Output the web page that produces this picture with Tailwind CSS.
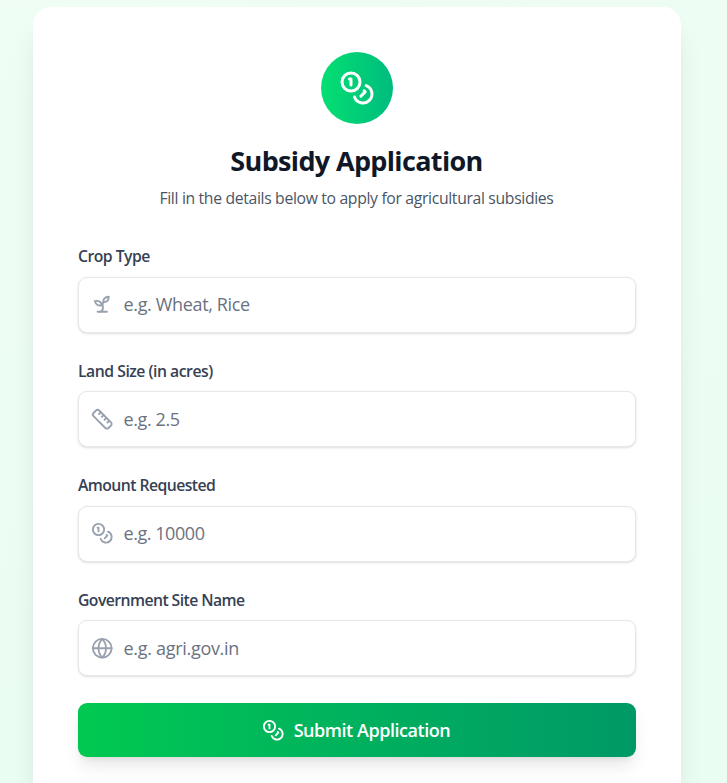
<!DOCTYPE html>
<html lang="en">
<head>
<meta charset="utf-8">
<title>Subsidy Application</title>
<script src="https://cdn.jsdelivr.net/npm/@tailwindcss/browser@4"></script>
</head>
<body class="h-[783px] overflow-hidden bg-[linear-gradient(165deg,#effdf4,#e9fdf3)] font-['Segoe_UI','Open_Sans','Noto_Sans',sans-serif]">
<svg class="hidden">
  <symbol id="coins" viewBox="0 0 24 24"><circle cx="8" cy="8" r="6"/><path d="M18.09 10.37A6 6 0 1 1 10.34 18"/><path d="M7 6h1v4"/><path d="m16.71 13.88.7.71-2.82 2.82"/></symbol>
</svg>
<main class="ml-[33px] mt-[7px] h-[776px] w-[648px] rounded-t-[18px] bg-white px-[45px] pt-[45px] shadow-[0_22px_28px_-5px_rgba(0,0,0,0.1),0_9px_11px_-7px_rgba(0,0,0,0.1)]">
  <header class="flex flex-col items-center">
    <div class="flex size-[72px] items-center justify-center rounded-full bg-linear-to-r from-[#05df72] to-[#00bc7d] text-white">
      <svg class="size-9 fill-none stroke-current stroke-2 [stroke-linecap:round] [stroke-linejoin:round]"><use href="#coins"/></svg>
    </div>
    <h1 class="mt-[19px] whitespace-nowrap pr-[1px] text-[27px] leading-[36px] font-bold tracking-[-0.65px] text-[#101828]">Subsidy Application</h1>
    <p class="mt-[8px] whitespace-nowrap pr-[1px] text-[15.75px] leading-[22px] tracking-[-0.34px] text-[#4a5565]">Fill in the details below to apply for agricultural subsidies</p>
  </header>
  <form class="mt-[35.7px]">
    <div class="h-[114.5px]">
      <label for="crop" class="block h-[32px] pt-[0.4px] text-[15.75px] leading-[22px] font-semibold tracking-[-0.52px] text-[#364153]">Crop Type</label>
      <div class="flex h-[56px] items-center gap-[10.5px] rounded-[9px] border border-gray-200 bg-white pl-[11.5px] shadow-[0_1px_3px_rgba(0,0,0,0.1),0_1px_2px_-1px_rgba(0,0,0,0.1)]">
        <svg viewBox="0 0 24 24" class="size-[22.5px] shrink-0 fill-none stroke-[#99a1af] stroke-2 [stroke-linecap:round] [stroke-linejoin:round]"><path d="M7 20h10"/><path d="M10 20c5.5-2.5.8-6.4 3-10"/><path d="M9.5 9.4c1.1.8 1.8 2.2 2.3 3.7-2 .4-3.5.4-4.8-.3-1.2-.6-2.3-1.9-3-4.2 2.8-.5 4.4 0 5.5.8z"/><path d="M14.1 6a7 7 0 0 0-1.1 4c1.9-.1 3.3-.6 4.3-1.4 1-1 1.6-2.3 1.7-4.6-2.7.1-4 1-4.9 2z"/></svg>
        <input id="crop" placeholder="e.g. Wheat, Rice" class="min-w-0 flex-1 pt-[0.6px] text-[18px] leading-[27px] tracking-[-0.35px] outline-none placeholder:text-[#6a7282]">
      </div>
    </div>
    <div class="h-[114.5px]">
      <label for="land" class="block h-[32px] pt-[0.4px] text-[15.75px] leading-[22px] font-semibold tracking-[-0.48px] text-[#364153]">Land Size (in acres)</label>
      <div class="flex h-[56px] items-center gap-[10.5px] rounded-[9px] border border-gray-200 bg-white pl-[11.5px] shadow-[0_1px_3px_rgba(0,0,0,0.1),0_1px_2px_-1px_rgba(0,0,0,0.1)]">
        <svg viewBox="0 0 24 24" class="size-[22.5px] shrink-0 fill-none stroke-[#99a1af] stroke-2 [stroke-linecap:round] [stroke-linejoin:round]"><path d="M21.3 15.3a2.4 2.4 0 0 1 0 3.4l-2.6 2.6a2.4 2.4 0 0 1-3.4 0L2.7 8.7a2.41 2.41 0 0 1 0-3.4l2.6-2.6a2.41 2.41 0 0 1 3.4 0Z"/><path d="m14.5 12.5 2-2"/><path d="m11.5 9.5 2-2"/><path d="m8.5 6.5 2-2"/><path d="m17.5 15.5 2-2"/></svg>
        <input id="land" placeholder="e.g. 2.5" class="min-w-0 flex-1 text-[18px] leading-[27px] tracking-[-0.4px] outline-none placeholder:text-[#6a7282]">
      </div>
    </div>
    <div class="h-[114.5px]">
      <label for="amount" class="block h-[32px] pt-[0.4px] text-[15.75px] leading-[22px] font-semibold tracking-[-0.56px] text-[#364153]">Amount Requested</label>
      <div class="flex h-[56px] items-center gap-[10.5px] rounded-[9px] border border-gray-200 bg-white pl-[11.5px] shadow-[0_1px_3px_rgba(0,0,0,0.1),0_1px_2px_-1px_rgba(0,0,0,0.1)]">
        <svg class="size-[22.5px] shrink-0 fill-none stroke-[#99a1af] stroke-2 [stroke-linecap:round] [stroke-linejoin:round]"><use href="#coins"/></svg>
        <input id="amount" placeholder="e.g. 10000" class="min-w-0 flex-1 pt-[0.6px] text-[18px] leading-[27px] tracking-[-0.45px] outline-none placeholder:text-[#6a7282]">
      </div>
    </div>
    <div class="h-[114.5px]">
      <label for="site" class="block h-[32px] pt-[0.4px] text-[15.75px] leading-[22px] font-semibold tracking-[-0.56px] text-[#364153]">Government Site Name</label>
      <div class="flex h-[56px] items-center gap-[10.5px] rounded-[9px] border border-gray-200 bg-white pl-[11.5px] shadow-[0_1px_3px_rgba(0,0,0,0.1),0_1px_2px_-1px_rgba(0,0,0,0.1)]">
        <svg viewBox="0 0 24 24" class="size-[22.5px] shrink-0 fill-none stroke-[#99a1af] stroke-2 [stroke-linecap:round] [stroke-linejoin:round]"><circle cx="12" cy="12" r="10"/><path d="M12 2a14.5 14.5 0 0 0 0 20 14.5 14.5 0 0 0 0-20"/><path d="M2 12h20"/></svg>
        <input id="site" placeholder="e.g. agri.gov.in" class="min-w-0 flex-1 text-[18px] leading-[27px] tracking-[-0.3px] outline-none placeholder:text-[#6a7282]">
      </div>
    </div>
    <button type="button" class="mt-[0.3px] flex h-[54px] w-full items-center justify-center gap-[9.5px] rounded-[9px] bg-linear-to-r from-[#00c950] to-[#009966] pt-px pr-[2px] text-[18px] font-semibold tracking-[-0.45px] text-white shadow-[0_11px_17px_-3px_rgba(0,0,0,0.1),0_4.5px_7px_-4.5px_rgba(0,0,0,0.1)]">
      <svg class="size-[22.5px] shrink-0 fill-none stroke-current stroke-2 [stroke-linecap:round] [stroke-linejoin:round]"><use href="#coins"/></svg>
      <span class="whitespace-nowrap">Submit Application</span>
    </button>
  </form>
</main>
</body>
</html>
